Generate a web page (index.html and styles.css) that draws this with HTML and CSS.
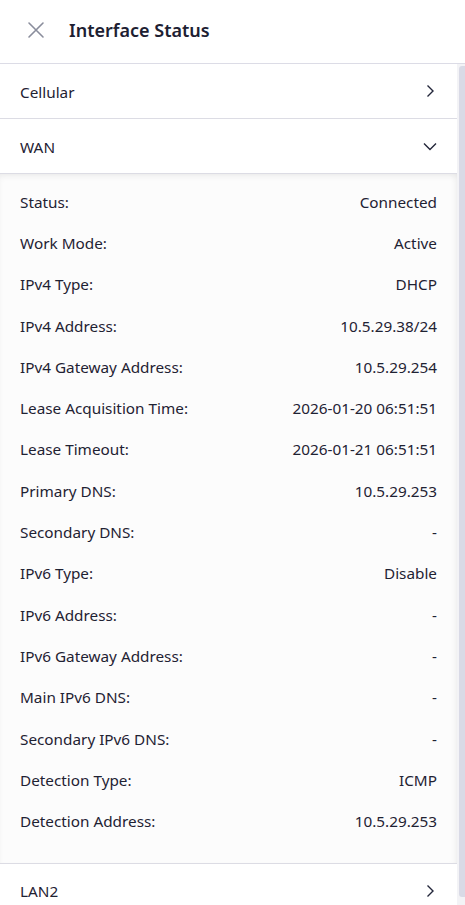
FILE: index.html
```html
<!DOCTYPE html>
<html>
<head>
<meta charset="utf-8">
<link rel="stylesheet" href="styles.css">
</head>
<body>
<div class="app">
  <header class="header">
    <button class="close" aria-label="Close">
      <svg width="18" height="18" viewBox="0 0 18 18"><path d="M2 2 L16 16 M16 2 L2 16" stroke="#8a8d9c" stroke-width="1.6" fill="none" stroke-linecap="round"/></svg>
    </button>
    <h1 class="title">Interface Status</h1>
  </header>
  <div class="body">
    <div class="content">
      <div class="section">
        <span>Cellular</span>
        <svg class="chev" width="14" height="14" viewBox="0 0 14 14"><path d="M4.5 1.5 L10 7 L4.5 12.5" stroke="#23263a" stroke-width="1.4" fill="none"/></svg>
      </div>
      <div class="section">
        <span>WAN</span>
        <svg class="chev" width="14" height="14" viewBox="0 0 14 14"><path d="M1 4.5 L7 10.5 L13 4.5" stroke="#23263a" stroke-width="1.4" fill="none"/></svg>
      </div>
      <div class="panel">
        <div class="row"><span>Status:</span><span>Connected</span></div>
        <div class="row"><span>Work Mode:</span><span>Active</span></div>
        <div class="row"><span>IPv4 Type:</span><span>DHCP</span></div>
        <div class="row"><span>IPv4 Address:</span><span>10.5.29.38/24</span></div>
        <div class="row"><span>IPv4 Gateway Address:</span><span>10.5.29.254</span></div>
        <div class="row"><span>Lease Acquisition Time:</span><span>2026-01-20 06:51:51</span></div>
        <div class="row"><span>Lease Timeout:</span><span>2026-01-21 06:51:51</span></div>
        <div class="row"><span>Primary DNS:</span><span>10.5.29.253</span></div>
        <div class="row"><span>Secondary DNS:</span><span>-</span></div>
        <div class="row"><span>IPv6 Type:</span><span>Disable</span></div>
        <div class="row"><span>IPv6 Address:</span><span>-</span></div>
        <div class="row"><span>IPv6 Gateway Address:</span><span>-</span></div>
        <div class="row"><span>Main IPv6 DNS:</span><span>-</span></div>
        <div class="row"><span>Secondary IPv6 DNS:</span><span>-</span></div>
        <div class="row"><span>Detection Type:</span><span>ICMP</span></div>
        <div class="row"><span>Detection Address:</span><span>10.5.29.253</span></div>
      </div>
      <div class="section">
        <span>LAN2</span>
        <svg class="chev" width="14" height="14" viewBox="0 0 14 14"><path d="M4.5 1.5 L10 7 L4.5 12.5" stroke="#23263a" stroke-width="1.4" fill="none"/></svg>
      </div>
    </div>
    <div class="scrollbar"><div class="thumb"></div></div>
  </div>
</div>
</body>
</html>
```

FILE: styles.css
```css
* { box-sizing: border-box; }
html, body {
  margin: 0;
  padding: 0;
  height: 100%;
  background: #fff;
}
body {
  font-family: "Noto Sans", "Open Sans", sans-serif;
  color: #1f2233;
  overflow: hidden;
}
.app {
  display: flex;
  flex-direction: column;
  height: 905px;
}
.header {
  flex: 0 0 64px;
  display: flex;
  align-items: center;
  border-bottom: 1px solid #dcdce6;
  padding-left: 27px;
}
.close {
  border: 0;
  background: none;
  padding: 0;
  width: 18px;
  height: 18px;
  display: flex;
  margin-right: 24px;
  margin-top: -3px;
}
.title {
  margin: 0;
  font-size: 18px;
  font-weight: 600;
  margin-top: -4px;
  color: #1d2032;
}
.body {
  flex: 1;
  display: flex;
  min-height: 0;
}
.content {
  flex: 1;
  overflow: hidden;
}
.scrollbar {
  flex: 0 0 8px;
  background: #f3f3f6;
  padding: 2px 0 8px 2px;
  display: flex;
}
.thumb {
  flex: 1;
  background: #d9dae6;
  border-radius: 3px 0 0 3px;
}
.section {
  height: 55px;
  display: flex;
  align-items: center;
  justify-content: space-between;
  padding: 1px 20px 0 20px;
  border-bottom: 1px solid #dcdce4;
  font-size: 15.3px;
}
.section .chev { margin-top: -1px; }
.panel {
  background: #fcfcfc;
  box-shadow: inset 0 4px 6px -2px rgba(0, 0, 0, 0.07), inset -5px 0 6px -3px rgba(0, 0, 0, 0.04);
  padding: 7px 20px 21px 20px;
  border-bottom: 1px solid #dcdce4;
}
.row {
  height: 41.3px;
  display: flex;
  align-items: center;
  justify-content: space-between;
  font-size: 15.3px;
}
```
